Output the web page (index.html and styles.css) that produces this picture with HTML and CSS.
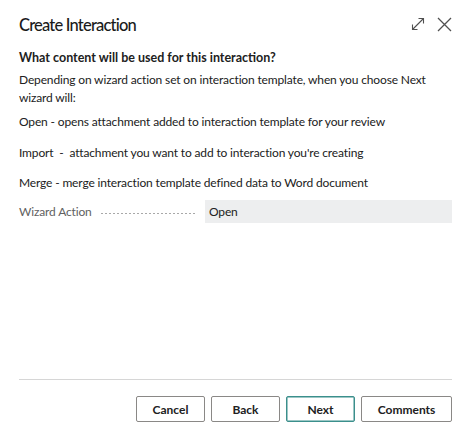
FILE: index.html
```html
<!DOCTYPE html>
<html>
<head>
<meta charset="utf-8">
<link rel="stylesheet" href="styles.css">
</head>
<body>
<div class="dialog">
  <div class="header">
    <h1 class="title">Create Interaction</h1>
    <div class="icons">
      <svg class="icon" width="14" height="14" viewBox="0 0 14 14"><path d="M1.5 12.5 L12.5 1.5 M7.5 1.5 H12.5 V6.5 M1.5 7.5 V12.5 H6.5" fill="none" stroke="#505050" stroke-width="1.1"/></svg>
      <svg class="icon" width="15" height="15" viewBox="0 0 15 15"><path d="M1 1 L14 14 M14 1 L1 14" fill="none" stroke="#505050" stroke-width="1.3"/></svg>
    </div>
  </div>
  <div class="content">
    <p class="question">What content will be used for this interaction?</p>
    <p class="intro">Depending on wizard action set on interaction template, when you choose Next wizard will:</p>
    <p class="item">Open - opens attachment added to interaction template for your review</p>
    <p class="item">Import &nbsp;- &nbsp;attachment you want to add to interaction you're creating</p>
    <p class="item">Merge - merge interaction template defined data to Word document</p>
    <div class="field">
      <div class="label"><span>Wizard Action</span><span class="leader"></span></div>
      <div class="value">Open</div>
    </div>
  </div>
  <div class="footer">
    <button class="btn">Cancel</button>
    <button class="btn">Back</button>
    <button class="btn primary">Next</button>
    <button class="btn wide">Comments</button>
  </div>
</div>
</body>
</html>
```
FILE: styles.css
```css
html, body {
  margin: 0;
  padding: 0;
  background: #fff;
}
body {
  font-family: Lato, "Open Sans", sans-serif;
  font-size: 12px;
  letter-spacing: -0.15px;
  color: #212121;
}
.dialog {
  width: 472px;
  height: 440px;
  display: flex;
  flex-direction: column;
  padding: 0 20px 0 19px;
  box-sizing: border-box;
}
.header {
  height: 50px;
  display: flex;
  align-items: center;
  justify-content: space-between;
}
.title {
  margin: 0;
  font-size: 16.5px;
  font-weight: 500;
  letter-spacing: -0.8px;
  color: #1b1b1b;
}
.icons {
  display: flex;
  align-items: center;
  gap: 12px;
  margin-top: -2px;
}
.icon { display: block; }
.content {
  flex: 1;
  display: flex;
  flex-direction: column;
}
.content p { margin: 0; line-height: 18px; }
.question {
  font-weight: 700;
  font-size: 12.5px;
  letter-spacing: 0;
  margin-top: -1px !important;
}
.intro { margin-top: 4px !important; }
.item { margin-top: 6px !important; }
.item + .item { margin-top: 12.5px !important; }
.field {
  display: flex;
  align-items: center;
  margin-top: 8px;
}
.label {
  width: 186px;
  display: flex;
  align-items: center;
  color: #616161;
}
.leader {
  flex: 1;
  height: 1px;
  margin: 3px 10px 0 8px;
  background-image: radial-gradient(circle, #a8a8a8 0.6px, transparent 0.7px);
  background-size: 4px 1px;
}
.value {
  flex: 1;
  height: 23px;
  line-height: 23px;
  background: #edeeef;
  padding-left: 4px;
}
.footer {
  border-top: 1px solid #d6d6d6;
  height: 61px;
  display: flex;
  justify-content: flex-end;
  align-items: flex-start;
  gap: 6px;
  padding-top: 16px;
  box-sizing: border-box;
}
.btn {
  font-family: inherit;
  font-size: 12px;
  font-weight: 700;
  letter-spacing: 0;
  color: #212121;
  background: #fff;
  border: 1px solid #8a8886;
  border-radius: 2px;
  width: 69px;
  height: 26px;
  padding: 0;
}
.btn.primary {
  border-color: #3b8f8c;
  box-shadow: inset 0 0 0 0.5px #3b8f8c;
}
.btn.wide { width: 91px; }
```
